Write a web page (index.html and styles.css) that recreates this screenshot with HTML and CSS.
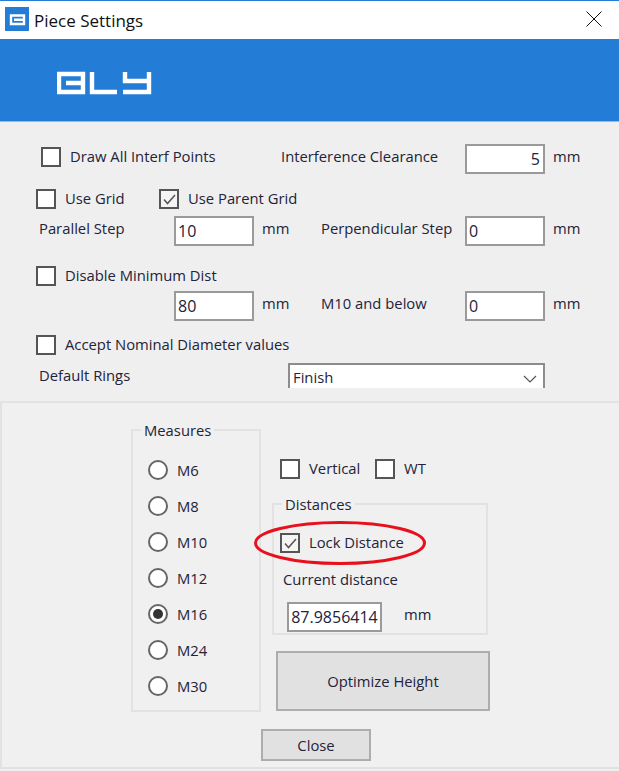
FILE: index.html
```html
<!DOCTYPE html>
<html lang="en">
<head>
<meta charset="utf-8">
<title>Piece Settings</title>
<link rel="stylesheet" href="styles.css">
</head>
<body>
<div class="window">
  <header class="titlebar">
    <svg class="app-icon" viewBox="0 0 24 24" aria-hidden="true">
      <rect width="24" height="24" fill="#237dd6"/>
      <path d="M6 8.500H19V17H6Z M9 12.700H19" fill="none" stroke="#fff" stroke-width="2.400"/>
    </svg>
    <span class="title">Piece Settings</span>
    <svg class="close-x" viewBox="0 0 16 16" aria-hidden="true"><path d="M.5.5l15 15M15.500.5l-15 15" stroke="#111" stroke-width="1" fill="none"/></svg>
  </header>
  <div class="banner">
    <svg class="logo" viewBox="0 0 96 24" aria-label="BLY" role="img">
      <path d="M2 3H26V21H2Z M9 12H26 M35 1V21H60 M68 1V10H92 M92 1V21H66" fill="none" stroke="#fff" stroke-width="4.400"/>
    </svg>
  </div>
  <section class="form">
    <div class="row row-1">
      <label class="check w-a"><span class="box"></span>Draw All Interf Points</label>
      <span class="lbl w-b">Interference Clearance</span>
      <span class="input right">5</span><span class="unit">mm</span>
    </div>
    <div class="row row-2">
      <label class="check w-c"><span class="box"></span>Use Grid</label>
      <label class="check"><span class="box checked"><svg viewBox="0 0 19 19"><path d="M4 9.500l3.500 4 7.500-8.500" fill="none" stroke="#555" stroke-width="1.500"/></svg></span>Use Parent Grid</label>
    </div>
    <div class="row row-3">
      <span class="lbl w-d">Parallel Step</span>
      <span class="input">10</span><span class="unit w-u">mm</span>
      <span class="lbl w-e">Perpendicular Step</span>
      <span class="input">0</span><span class="unit">mm</span>
    </div>
    <div class="row row-4">
      <label class="check"><span class="box"></span>Disable Minimum Dist</label>
    </div>
    <div class="row row-5">
      <span class="input">80</span><span class="unit w-u">mm</span>
      <span class="lbl w-e">M10 and below</span>
      <span class="input">0</span><span class="unit">mm</span>
    </div>
    <div class="row row-6">
      <label class="check"><span class="box"></span>Accept Nominal Diameter values</label>
    </div>
    <div class="row row-7">
      <span class="lbl w-f">Default Rings</span>
      <div class="combo">Finish
        <svg class="chev" viewBox="0 0 14 8" aria-hidden="true"><path d="M1 1l6 6 6-6" fill="none" stroke="#555" stroke-width="1.200"/></svg>
      </div>
    </div>
  </section>
  <section class="panel">
    <div class="panel-main">
      <fieldset class="group measures">
        <legend>Measures</legend>
        <label class="radio"><span class="dot"></span>M6</label>
        <label class="radio"><span class="dot"></span>M8</label>
        <label class="radio"><span class="dot"></span>M10</label>
        <label class="radio"><span class="dot"></span>M12</label>
        <label class="radio"><span class="dot on"></span>M16</label>
        <label class="radio"><span class="dot"></span>M24</label>
        <label class="radio"><span class="dot"></span>M30</label>
      </fieldset>
      <div class="side">
        <div class="side-checks">
          <label class="check w-g"><span class="box"></span>Vertical</label>
          <label class="check"><span class="box"></span>WT</label>
        </div>
        <fieldset class="group distances">
          <legend>Distances</legend>
          <label class="check lock"><span class="box checked"><svg viewBox="0 0 19 19"><path d="M4 9.500l3.500 4 7.500-8.500" fill="none" stroke="#555" stroke-width="1.500"/></svg></span>Lock Distance</label>
          <div class="current">Current distance</div>
          <div class="dist-row"><span class="input dist">87.9856414</span><span class="unit">mm</span></div>
        </fieldset>
        <button class="btn optimize" type="button">Optimize Height</button>
      </div>
    </div>
    <button class="btn close" type="button">Close</button>
    <svg class="ellipse" viewBox="0 0 172 44" aria-hidden="true"><ellipse cx="86" cy="22" rx="84.500" ry="20.500" fill="none" stroke="#e8101c" stroke-width="3"/></svg>
  </section>
</div>
</body>
</html>
```
FILE: styles.css
```css
* { box-sizing: border-box; }
html, body { margin: 0; padding: 0; }
body {
  width: 619px;
  height: 771px;
  overflow: hidden;
  background: #efefef;
  font-family: "Open Sans", "Liberation Sans", sans-serif;
  font-size: 14.8px;
  color: #23233a;
}
.window { width: 619px; height: 771px; display: flex; flex-direction: column; }
.titlebar {
  height: 39px;
  flex: none;
  border-top: 1px solid #237dd6;
  background: #fff;
  display: flex;
  align-items: center;
  padding: 0 17px 2px 5px;
}
.app-icon { width: 24px; height: 24px; flex: none; margin-right: 5px; }
.title { font-size: 17px; color: #111; flex: 1; padding-top: 2px; }
.close-x { width: 16px; height: 16px; flex: none; }
.banner {
  height: 83px;
  flex: none;
  background: #237dd6;
  border-bottom: 1px solid #8dbbe8;
  padding: 32px 0 0 57px;
}
.logo { width: 96px; height: 24px; display: block; }

.form { height: 266px; flex: none; overflow: hidden; }
.row { display: flex; align-items: center; padding-left: 36px; }
.row-1 { height: 30px; margin-top: 22px; padding-left: 41px; }
.row-2 { height: 20px; margin-top: 15px; }
.row-3 { height: 30px; margin-top: 7px; padding-left: 39px; }
.row-4 { height: 20px; margin-top: 20px; }
.row-5 { height: 30px; margin-top: 5px; padding-left: 174px; }
.row-6 { height: 20px; margin-top: 14px; }
.row-7 { height: 25px; margin-top: 8px; padding-left: 39px; align-items: flex-start; }

.w-a { width: 240px; margin-bottom: 5px; }
.w-b { width: 184px; }
.w-c { width: 123px; }
.w-d { width: 135px; }
.w-e { width: 144px; }
.w-f { width: 249px; padding-top: 2px; }
.w-g { width: 95px; }
.w-u { width: 59px; }

.check { display: flex; align-items: flex-start; white-space: nowrap; line-height: 18px; }
.lbl { white-space: nowrap; flex: none; padding-bottom: 6px; }
.w-f.lbl { padding-bottom: 0; }
.box {
  width: 20px;
  height: 20px;
  flex: none;
  margin-right: 9px;
  background: #fff;
  border: 2px solid #555;
}
.box.checked { background: #f4f4f4; }
.box svg { display: block; width: 19px; height: 19px; margin: -1.500px; }

.input {
  width: 80px;
  height: 30px;
  flex: none;
  display: flex;
  align-items: center;
  padding: 0 3px 0 2px;
  background: #fff;
  border: 2px solid #9a9a9a;
  font-size: 16px;
}
.input.right { justify-content: flex-end; }
.unit { margin-left: 8px; padding-bottom: 6px; }
.combo {
  width: 257px;
  height: 26px;
  position: relative;
  padding: 2px 0 0 3px;
  background: #fff;
  border: 2px solid #8c8c8c;
  border-bottom: 0;
}
.chev { position: absolute; right: 6px; top: 10px; width: 14px; height: 8px; }

.panel {
  position: relative;
  flex: 1;
  margin-top: 13px;
  margin-bottom: 2px;
  background: #f0f0f0;
  border-top: 2px solid #e2e2e2;
  border-bottom: 2px solid #e2e2e2;
  border-left: 2px solid #e2e2e2;
}
.panel-main { display: flex; padding: 17px 0 0 129px; gap: 11px; align-items: flex-start; }
.group { margin: 0; min-width: 0; border: 2px solid #e2e2e2; padding: 0; }
.group legend { margin-left: 8px; padding: 0 3px; line-height: 20px; }
.measures { width: 130px; height: 292px; padding-top: 12px; }
.radio { display: flex; align-items: center; height: 36px; margin-left: 15px; }
.dot {
  width: 20px;
  height: 20px;
  flex: none;
  margin-right: 9px;
  background: #fff;
  border: 2px solid #666;
  border-radius: 50%;
  display: flex;
  align-items: center;
  justify-content: center;
}
.dot.on::after { content: ""; width: 10px; height: 10px; border-radius: 50%; background: #333; }
.side { width: 219px; padding-top: 39px; }
.side-checks { display: flex; padding-left: 8px; height: 20px; }
.distances { width: 216px; height: 141px; margin-top: 15px; padding-top: 19px; }
.lock { height: 20px; margin-left: 6px; }
.current { margin: 16px 0 0 9px; line-height: 20px; }
.dist-row { display: flex; align-items: center; margin: 13px 0 0 13px; }
.input.dist { width: 95px; justify-content: center; padding: 0; }
.dist-row .unit { margin-left: 22px; }
.btn {
  font: inherit;
  color: inherit;
  background: #e1e1e1;
  border: 2px solid #adadad;
  padding: 0;
}
.optimize { display: block; width: 214px; height: 60px; margin: 16px 0 0 4px; }
.close { display: block; width: 110px; height: 32px; margin: 17px 0 0 259px; }
.ellipse { position: absolute; left: 252px; top: 118px; width: 172px; height: 44px; }
```
